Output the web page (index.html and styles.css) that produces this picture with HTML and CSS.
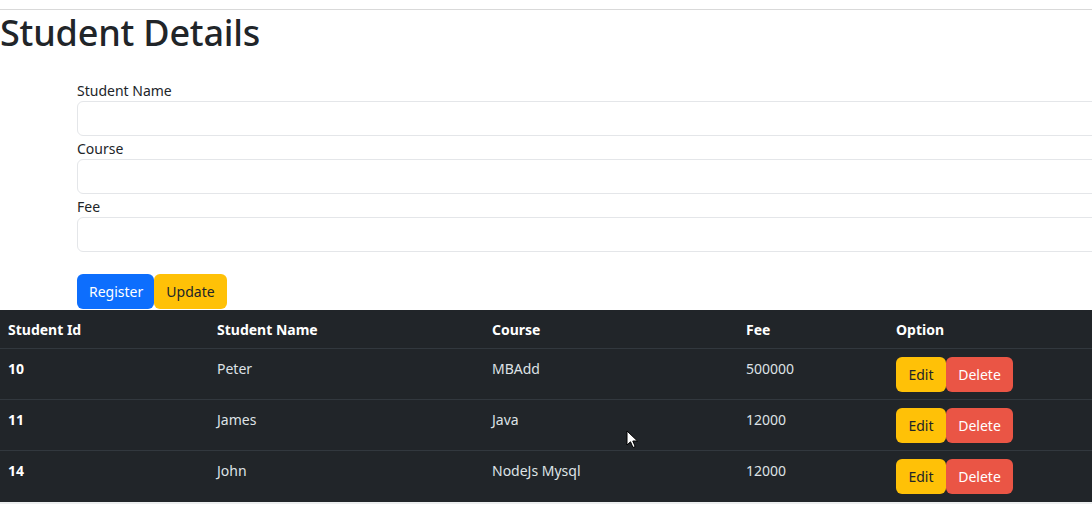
FILE: index.html
```html
<!DOCTYPE html>
<html lang="en">
<head>
<meta charset="utf-8">
<title>Student Details</title>
<link rel="stylesheet" href="styles.css">
</head>
<body>
<div class="topbar"></div>
<h1 class="title">Student Details</h1>
<form class="form">
  <div class="field">
    <label class="label">Student Name</label>
    <input class="input" type="text">
  </div>
  <div class="field">
    <label class="label">Course</label>
    <input class="input" type="text">
  </div>
  <div class="field">
    <label class="label">Fee</label>
    <input class="input" type="text">
  </div>
  <div class="actions"><button type="button" class="btn btn-primary">Register</button><button type="button" class="btn btn-warning">Update</button></div>
</form>
<div class="table-wrap">
<table class="table">
  <colgroup>
    <col class="c1"><col class="c2"><col class="c3"><col class="c4"><col class="c5">
  </colgroup>
  <thead>
    <tr><th>Student Id</th><th>Student Name</th><th>Course</th><th>Fee</th><th>Option</th></tr>
  </thead>
  <tbody>
    <tr><th>10</th><td>Peter</td><td>MBAdd</td><td>500000</td><td><button type="button" class="btn btn-warning">Edit</button><button type="button" class="btn btn-danger">Delete</button></td></tr>
    <tr><th>11</th><td>James</td><td>Java</td><td>12000</td><td><button type="button" class="btn btn-warning">Edit</button><button type="button" class="btn btn-danger">Delete</button></td></tr>
    <tr><th>14</th><td>John</td><td>NodeJs Mysql</td><td>12000</td><td><button type="button" class="btn btn-warning">Edit</button><button type="button" class="btn btn-danger">Delete</button></td></tr>
  </tbody>
</table>
<svg class="cursor" width="13" height="19" viewBox="0 0 13 19"><path d="M1 1 L1 15 L4.5 11.8 L7 17.5 L9.2 16.5 L6.8 11 L11.5 11 Z" fill="#fff" stroke="#000" stroke-width="1"/></svg>
</div>
</body>
</html>
```
FILE: styles.css
```css
* { box-sizing: border-box; }
body {
  margin: 0;
  font-family: "Noto Sans", "Open Sans", sans-serif;
  color: #212529;
  background: #fff;
  overflow: hidden;
}
.topbar {
  height: 10px;
  border-bottom: 1px solid #d9d9d9;
}
.title {
  margin: 0;
  font-size: 36px;
  font-weight: 500;
  line-height: 46px;
  letter-spacing: -0.2px;
}
.form {
  padding-left: 77px;
  margin-top: 22px;
}
.field {
  display: flex;
  flex-direction: column;
}
.label {
  font-size: 14px;
  line-height: 20px;
  padding-top: 3px;
  color: #212529;
}
.input {
  width: 1030px;
  height: 35px;
  border: 1px solid #e4e6e9;
  border-radius: 6px;
  background: #fff;
  font: inherit;
}
.actions {
  display: flex;
  margin-top: 22px;
  margin-bottom: 1px;
}
.btn {
  font-family: inherit;
  font-size: 14px;
  height: 35px;
  padding: 0 11px;
  border: 1px solid transparent;
  border-radius: 6px;
  line-height: 33px;
  cursor: pointer;
}
.btn-primary { background: #0d6efd; color: #fff; width: 77px; }
.btn-warning { background: #ffc107; color: #212529; }
.actions .btn-warning { width: 73px; }
.btn-danger { background: #ea5545; color: #fff; }
.table-wrap {
  position: relative;
  border-bottom: 2px solid #eceeef;
}
.table {
  width: 100%;
  border-collapse: collapse;
  table-layout: fixed;
  background: #212529;
  color: #dee2e6;
  font-size: 14px;
}
.c1 { width: 209px; }
.c2 { width: 275px; }
.c3 { width: 254px; }
.c4 { width: 150px; }
.table th, .table td {
  text-align: left;
  vertical-align: top;
  padding: 8px 8px 7px;
  line-height: 24px;
  border-bottom: 1px solid #32383e;
}
.table thead th {
  color: #fff;
  font-weight: 700;
  line-height: 21px;
  padding: 9px 8px 8px;
}
.table tbody th { color: #fff; font-weight: 700; }
.table tbody tr:last-child th, .table tbody tr:last-child td { border-bottom: none; padding-bottom: 8px; }
.table td .btn { vertical-align: top; }
.table td .btn-warning { width: 50px; padding: 0; }
.table td .btn-danger { width: 67px; padding: 0; }
.cursor {
  position: absolute;
  left: 626px;
  top: 120px;
}
```
